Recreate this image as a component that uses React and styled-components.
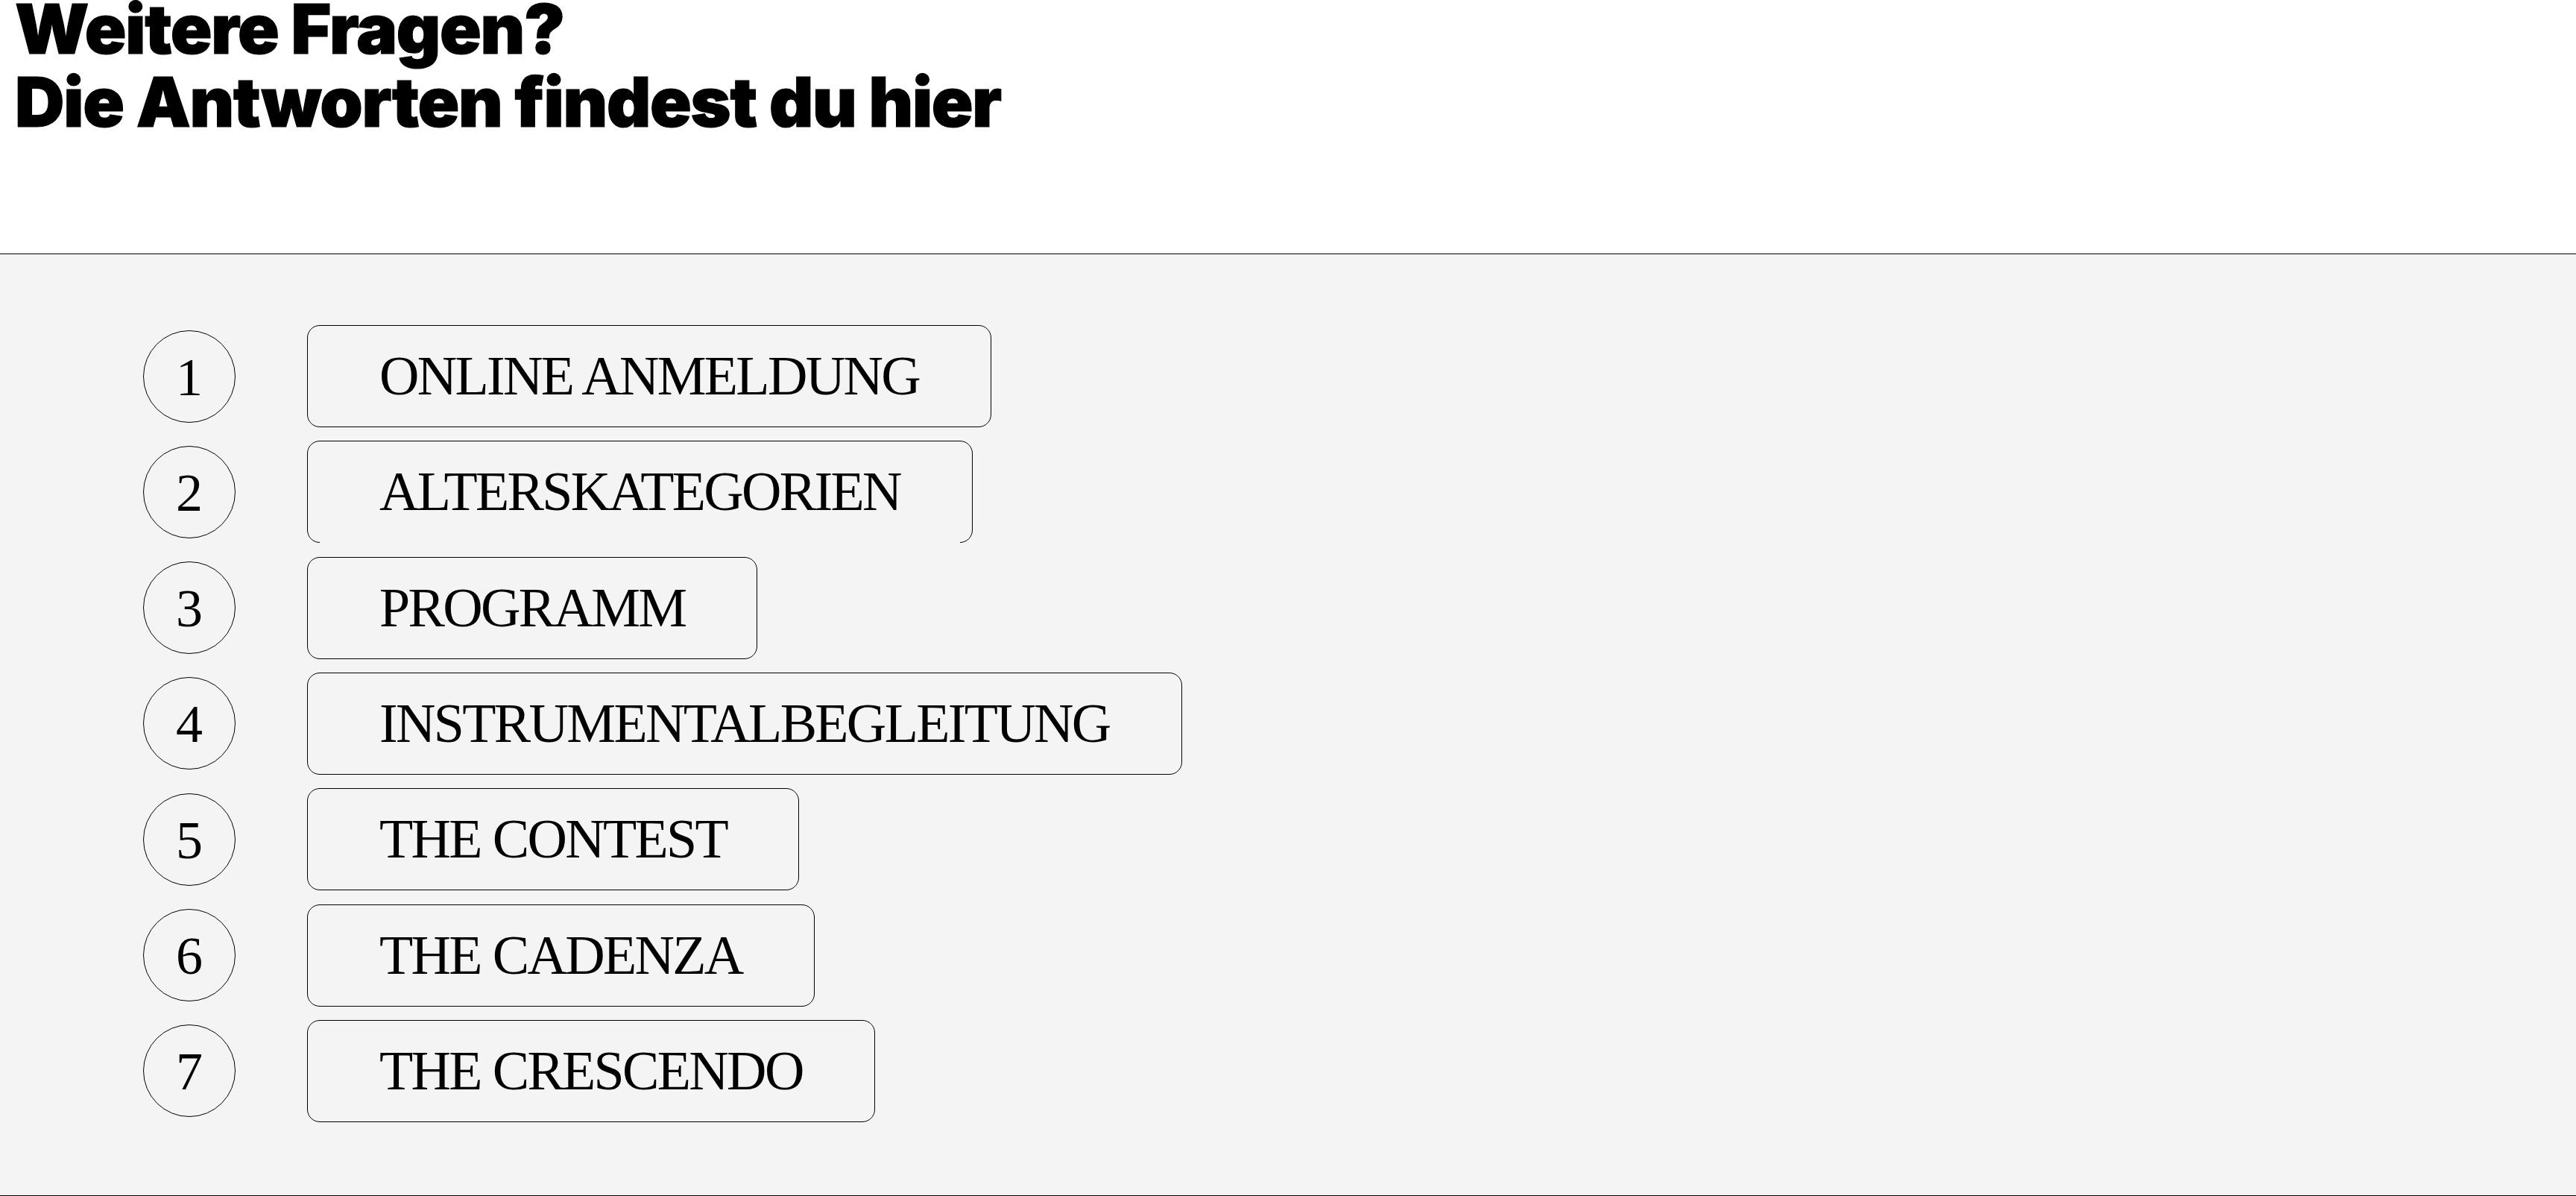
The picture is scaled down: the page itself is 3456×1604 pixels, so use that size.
import React from "react";
import styled, { createGlobalStyle } from "styled-components";

const GlobalStyle = createGlobalStyle`
  html, body {
    margin: 0;
    padding: 0;
    background: #ffffff;
    color: #000;
  }
  * { box-sizing: border-box; }
`;

const Page = styled.div`
  width: 100%;
  display: flex;
  flex-direction: column;
`;

const Header = styled.header`
  height: 341px;
  padding: 0 0 0 20px;
  background: #ffffff;
  border-bottom: 1px solid #000;
`;

const Title = styled.h2`
  margin: 0;
  display: flex;
  flex-direction: column;
  gap: 21px;
  font-family: "Inter", "Liberation Sans", sans-serif;
  font-weight: 900;
  font-size: 92px;
  letter-spacing: -0.014em;
  -webkit-text-stroke: 1.2px #000;
  color: #000;
`;

const TitleLine = styled.span`
  display: block;
  line-height: 77px;
  white-space: nowrap;
`;

const Section = styled.section`
  background: #f4f4f4;
  height: 1263px;
  border-bottom: 1px solid #000;
  padding: 95px 0 0 192px;
`;

const List = styled.ol`
  list-style: none;
  margin: 0;
  padding: 0;
  display: flex;
  flex-direction: column;
  gap: 18.33px;
`;

const Row = styled.li`
  display: flex;
  align-items: center;
  gap: 96px;
`;

const Num = styled.span`
  flex: none;
  width: 124px;
  height: 124px;
  border: 1px solid #000;
  border-radius: 50%;
  display: flex;
  align-items: center;
  justify-content: center;
  font-family: "Liberation Serif", "Times New Roman", serif;
  font-size: 72px;
  line-height: 1;
  padding-top: 2px;
`;

const Pill = styled.a`
  position: relative;
  height: 137px;
  display: inline-flex;
  align-items: center;
  padding: 0 96px;
  border: 1px solid #000;
  border-radius: 17px;
  font-family: "Liberation Serif", "Times New Roman", serif;
  font-size: 74px;
  letter-spacing: -0.036em;
  color: #000;
  text-decoration: none;
  white-space: nowrap;
  cursor: pointer;

  ${(p) =>
    p.$active &&
    `
    &::after {
      content: "";
      position: absolute;
      left: 16px;
      right: 16px;
      bottom: -1px;
      height: 1px;
      background: #f4f4f4;
    }
  `}
`;

const items = [
  "ONLINE ANMELDUNG",
  "ALTERSKATEGORIEN",
  "PROGRAMM",
  "INSTRUMENTALBEGLEITUNG",
  "THE CONTEST",
  "THE CADENZA",
  "THE CRESCENDO",
];

export default function App() {
  return (
    <Page>
      <GlobalStyle />
      <Header>
        <Title>
          <TitleLine>Weitere Fragen?</TitleLine>
          <TitleLine>Die Antworten findest du hier</TitleLine>
        </Title>
      </Header>
      <Section>
        <List>
          {items.map((label, i) => (
            <Row key={label}>
              <Num>{i + 1}</Num>
              <Pill $active={i === 1}>{label}</Pill>
            </Row>
          ))}
        </List>
      </Section>
    </Page>
  );
}
